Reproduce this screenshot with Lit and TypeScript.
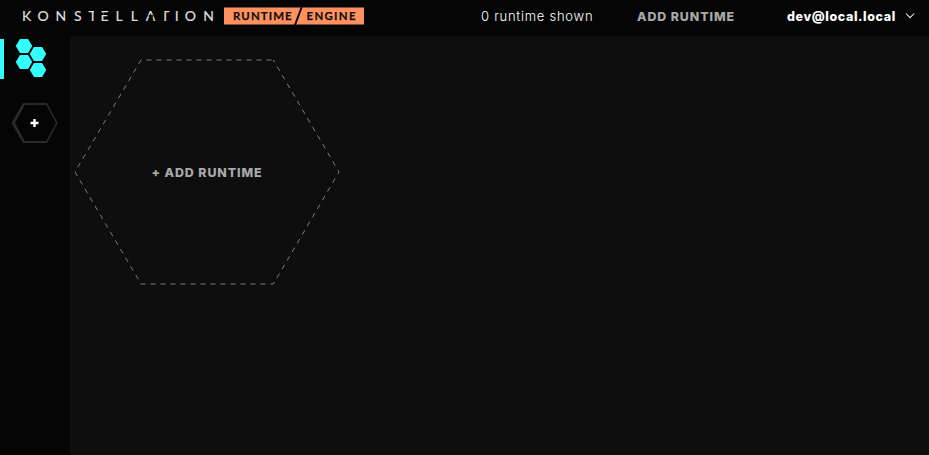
import { LitElement, html, svg, css } from "lit";
import { customElement } from "lit/decorators.js";

const WORDMARK = "KONSTELLATION";
const WORDMARK_X = "22 37.6 55.6 73.9 88.4 100.4 115.4 130.8 145.8 161.1 174.8 184.8 203.3";

@customElement("brand-logo")
class BrandLogo extends LitElement {
  static styles = css`
    :host { display: block; width: 370px; height: 36px; }
    svg { display: block; }
    .word { font: 400 14px Lato, sans-serif; fill: #dedede; stroke: #dedede; stroke-width: 0.2; }
    .tag { font: 700 11.4px Lato, sans-serif; fill: #14100e; stroke: #14100e; stroke-width: 0.25; }
    .cut { fill: #050505; }
  `;
  render() {
    return html`<svg width="370" height="36" viewBox="0 0 370 36">
      <text class="word" x=${WORDMARK_X} y="21">${WORDMARK}</text>
      <rect class="cut" x="94" y="10" width="5" height="3" />
      <rect class="cut" x="100.6" y="12.6" width="2.8" height="2.4" />
      <rect class="cut" x="148.8" y="15" width="4" height="3.6" />
      <rect class="cut" x="160.5" y="10" width="3.9" height="3" />
      <rect x="224" y="7.5" width="140" height="17" fill="#ff9160" />
      <text class="tag" x="233" y="20.2" textLength="58.6">RUNTIME</text>
      <path d="M295 25 301.7 7" stroke="#050505" stroke-width="2" />
      <text class="tag" x="306.5" y="20.2" textLength="49">ENGINE</text>
    </svg>`;
  }
}

@customElement("app-header")
class AppHeader extends LitElement {
  static styles = css`
    :host { display: flex; align-items: center; height: 36px; background: #050505; }
    .count, .add, .user { height: 36px; white-space: nowrap; box-sizing: border-box; }
    .count { margin-left: 111px; width: 156px; font: 300 13px/33px Inter, sans-serif; letter-spacing: 0.74px; color: #fff; }
    .add { width: 150px; font: 800 12.4px/33px Inter, sans-serif; letter-spacing: 0.9px; color: #a9a9a9; }
    .user { display: flex; font: 800 12.5px/33px Inter, sans-serif; letter-spacing: 0.6px; color: #fff; }
    .name { width: 117px; }
    .chevron { margin-top: 12px; }
  `;
  render() {
    return html`
      <brand-logo></brand-logo>
      <span class="count">0 runtime shown</span>
      <span class="add">ADD RUNTIME</span>
      <span class="user"><span class="name">dev@local.local</span>
        <svg class="chevron" width="12" height="8" viewBox="0 0 12 8">
          <path d="M2 1.5 6 5.7 10.2 1.5" fill="none" stroke="#f0f0f0" stroke-width="1.05" />
        </svg>
      </span>`;
  }
}

const CELLS = [[24, 10], [38, 18], [24, 26], [38, 34]];

@customElement("side-nav")
class SideNav extends LitElement {
  static styles = css`
    :host { display: flex; flex-direction: column; width: 70px; background: #050505; }
    svg { display: block; }
    .home { margin-bottom: 22px; }
  `;
  render() {
    return html`
      <svg class="home" width="70" height="44" viewBox="0 0 70 44">
        <rect y="3" width="4" height="40" fill="#3ff" />
        ${CELLS.map(([x, y]) => svg`<path fill="#3ff" d=${`M${x - 8.2} ${y}l4.1-7h8.2l4.1 7-4.1 7h-8.2z`} />`)}
      </svg>
      <svg width="70" height="44" viewBox="0 0 70 44">
        <path fill="#2a2a2a" fill-rule="evenodd" d="M11.5 21 23 1H47L57.7 21 47 41H23ZM14.9 21 24.8 39H46.2L56 21 46.2 3H24.8Z" />
        <path d="M30.5 21h8M34.5 17v8" stroke="#fff" stroke-width="2.5" />
      </svg>`;
  }
}

@customElement("app-root")
class AppRoot extends LitElement {
  static styles = css`
    :host { display: flex; flex-direction: column; height: 455px; background: #0e0e0e; overflow: hidden; }
    .body { display: flex; flex: 1; }
    .board { padding: 19px 0 0 4px; }
    .tile { display: grid; place-items: center; width: 266px; height: 234px; }
    .tile > * { grid-area: 1 / 1; }
    .label { padding-top: 2px; font: 800 12.4px/16px Inter, sans-serif; letter-spacing: 0.9px; color: #a9a9a9; white-space: nowrap; }
  `;
  render() {
    return html`
      <app-header></app-header>
      <div class="body">
        <side-nav></side-nav>
        <main class="board">
          <div class="tile">
            <svg width="266" height="234" viewBox="74 55 266 234">
              <path d="M273.3 60 339 172 273.3 284H141L75 172 141 60Z" fill="none" stroke="#7c7c7c"
                stroke-width="1" stroke-dasharray="5 5" stroke-dashoffset="2.5" />
            </svg>
            <span class="label">+ ADD RUNTIME</span>
          </div>
        </main>
      </div>`;
  }
}
